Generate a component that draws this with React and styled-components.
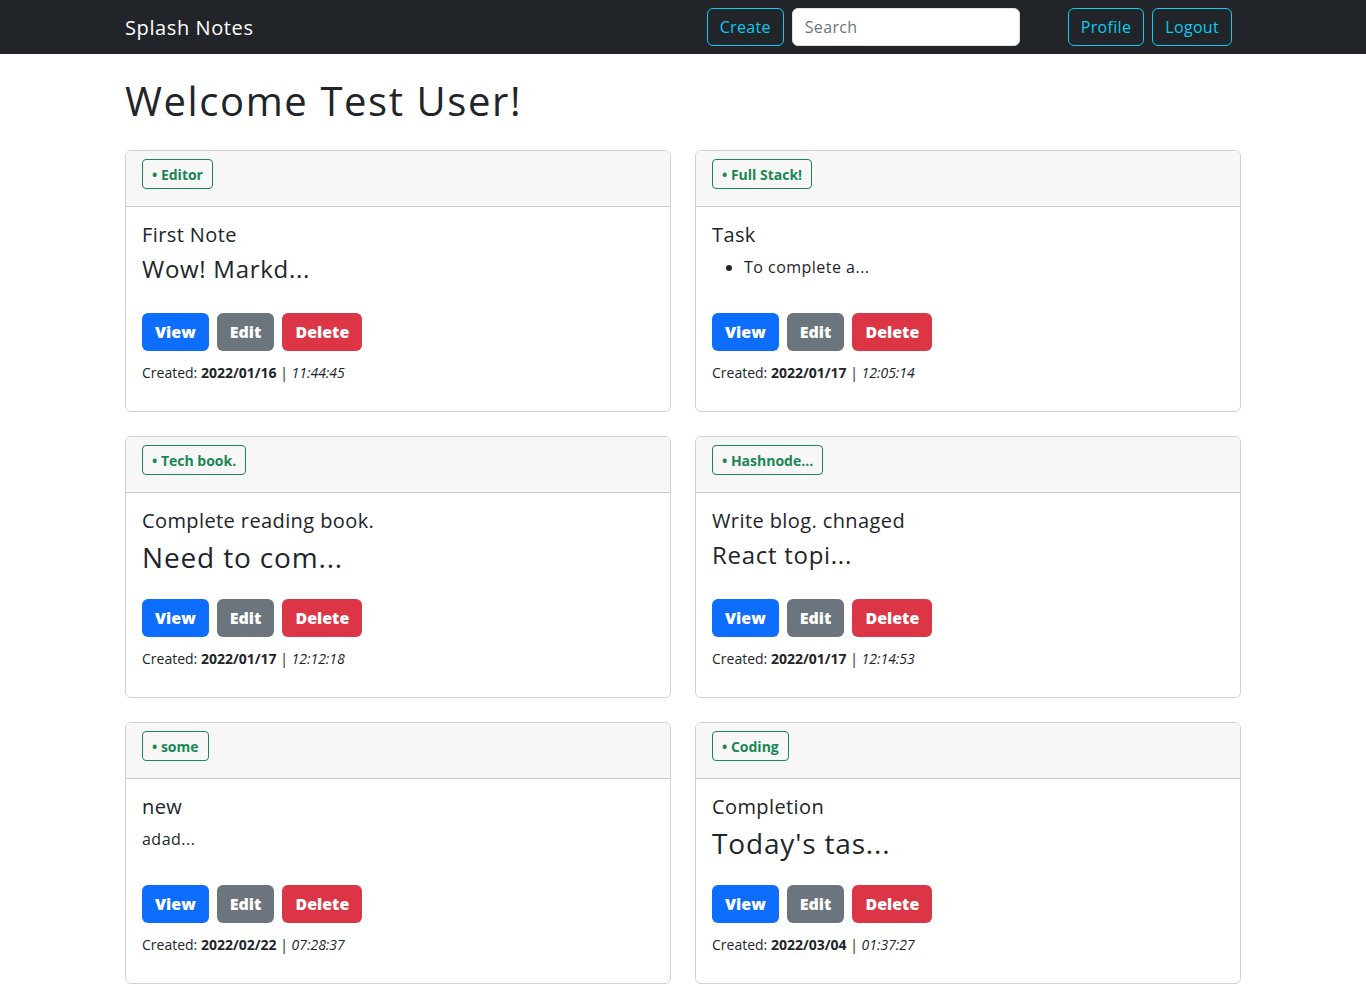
import React from "react";
import styled, { createGlobalStyle } from "styled-components";

const GlobalStyle = createGlobalStyle`
  * { box-sizing: border-box; }
  body {
    margin: 0;
    font-family: "Open Sans", "DejaVu Sans", sans-serif;
    color: #212529;
    background: #fff;
  }
`;

const NavBar = styled.nav`
  background: #212529;
  height: 54px;
  display: flex;
  align-items: center;
`;

const Container = styled.div`
  width: 1140px;
  margin: 0 auto;
  padding: 0 12px;
`;

const NavInner = styled(Container)`
  display: flex;
  align-items: center;
`;

const Brand = styled.a`
  color: #fff;
  font-size: 20px;
  letter-spacing: 0.03em;
  text-decoration: none;
  margin-right: auto;
`;

const NavGroup = styled.div`
  display: flex;
  gap: 8px;
  margin-left: ${(p) => p.$left || 0}px;
  margin-right: ${(p) => p.$right || 0}px;
`;

const OutlineButton = styled.button`
  height: 38px;
  padding: 0 12px;
  background: transparent;
  border: 1px solid #0dcaf0;
  border-radius: 6px;
  color: #0dcaf0;
  font-family: inherit;
  font-size: 16px;
  letter-spacing: 0.02em;
`;

const SearchInput = styled.input`
  width: 228px;
  height: 38px;
  padding: 0 12px;
  border: 1px solid #dee2e6;
  border-radius: 6px;
  font-family: inherit;
  font-size: 16px;
  letter-spacing: 0.02em;
  &::placeholder { color: #6c757d; }
`;

const Title = styled.h1`
  font-size: 40px;
  font-weight: 500;
  letter-spacing: 0.04em;
  line-height: 48px;
  margin: 23px 0 25px;
`;

const Grid = styled.div`
  display: grid;
  grid-template-columns: 1fr 1fr;
  column-gap: 24px;
  row-gap: 24px;
`;

const Card = styled.div`
  border: 1px solid rgba(0, 0, 0, 0.175);
  border-radius: 6px;
  overflow: hidden;
  height: 262px;
  display: flex;
  flex-direction: column;
`;

const CardHeader = styled.div`
  background: #f7f7f7;
  border-bottom: 1px solid rgba(0, 0, 0, 0.175);
  padding: 8px 16px 16px;
  height: 56px;
`;

const Badge = styled.span`
  display: inline-flex;
  align-items: center;
  height: 30px;
  padding: 0 9px;
  border: 1px solid #198754;
  border-radius: 4px;
  color: #198754;
  font-size: 14px;
  font-weight: 700;
`;

const CardBody = styled.div`
  padding: 16px;
  flex: 1;
`;

const NoteTitle = styled.h5`
  font-size: 20px;
  font-weight: 500;
  letter-spacing: 0.02em;
  line-height: 24px;
  margin: 0 0 8px;
`;

const Preview = styled.div`
  height: 58px;
  font-size: ${(p) => p.$size}px;
  letter-spacing: 0.03em;
  line-height: ${(p) => (p.$size > 16 ? 1.2 : 1.5)};
  font-weight: ${(p) => (p.$size > 16 ? 500 : 400)};
`;

const PreviewList = styled.ul`
  margin: 0;
  padding-left: 32px;
`;

const Actions = styled.div`
  display: flex;
  gap: 8px;
`;

const ActionButton = styled.button`
  height: 38px;
  padding: 0 13px;
  border: none;
  border-radius: 6px;
  background: ${(p) => p.$bg};
  color: #fff;
  font-family: inherit;
  font-size: 16px;
  font-weight: 800;
`;

const Stamp = styled.div`
  margin-top: 11px;
  font-size: 14px;
  line-height: 21px;
`;

const notes = [
  { tag: "Editor", title: "First Note", preview: "Wow! Markd...", size: 24, date: "2022/01/16", time: "11:44:45" },
  { tag: "Full Stack!", title: "Task", preview: "To complete a...", list: true, size: 16, date: "2022/01/17", time: "12:05:14" },
  { tag: "Tech book.", title: "Complete reading book.", preview: "Need to com...", size: 28, date: "2022/01/17", time: "12:12:18" },
  { tag: "Hashnode...", title: "Write blog. chnaged", preview: "React topi...", size: 24, date: "2022/01/17", time: "12:14:53" },
  { tag: "some", title: "new", preview: "adad...", size: 16, date: "2022/02/22", time: "07:28:37" },
  { tag: "Coding", title: "Completion", preview: "Today's tas...", size: 28, date: "2022/03/04", time: "01:37:27" },
];

function NoteCard({ note }) {
  return (
    <Card>
      <CardHeader>
        <Badge>• {note.tag}</Badge>
      </CardHeader>
      <CardBody>
        <NoteTitle>{note.title}</NoteTitle>
        <Preview $size={note.size}>
          {note.list ? (
            <PreviewList>
              <li>{note.preview}</li>
            </PreviewList>
          ) : (
            note.preview
          )}
        </Preview>
        <Actions>
          <ActionButton $bg="#0d6efd">View</ActionButton>
          <ActionButton $bg="#6c757d">Edit</ActionButton>
          <ActionButton $bg="#dc3545">Delete</ActionButton>
        </Actions>
        <Stamp>
          Created: <b>{note.date}</b> | <i>{note.time}</i>
        </Stamp>
      </CardBody>
    </Card>
  );
}

export default function App() {
  return (
    <>
      <GlobalStyle />
      <NavBar>
        <NavInner>
          <Brand href="#">Splash Notes</Brand>
          <NavGroup>
            <OutlineButton>Create</OutlineButton>
            <SearchInput placeholder="Search" />
          </NavGroup>
          <NavGroup $left={48} $right={9}>
            <OutlineButton>Profile</OutlineButton>
            <OutlineButton>Logout</OutlineButton>
          </NavGroup>
        </NavInner>
      </NavBar>
      <Container>
        <Title>Welcome Test User!</Title>
        <Grid>
          {notes.map((n) => (
            <NoteCard key={n.tag} note={n} />
          ))}
        </Grid>
      </Container>
    </>
  );
}
